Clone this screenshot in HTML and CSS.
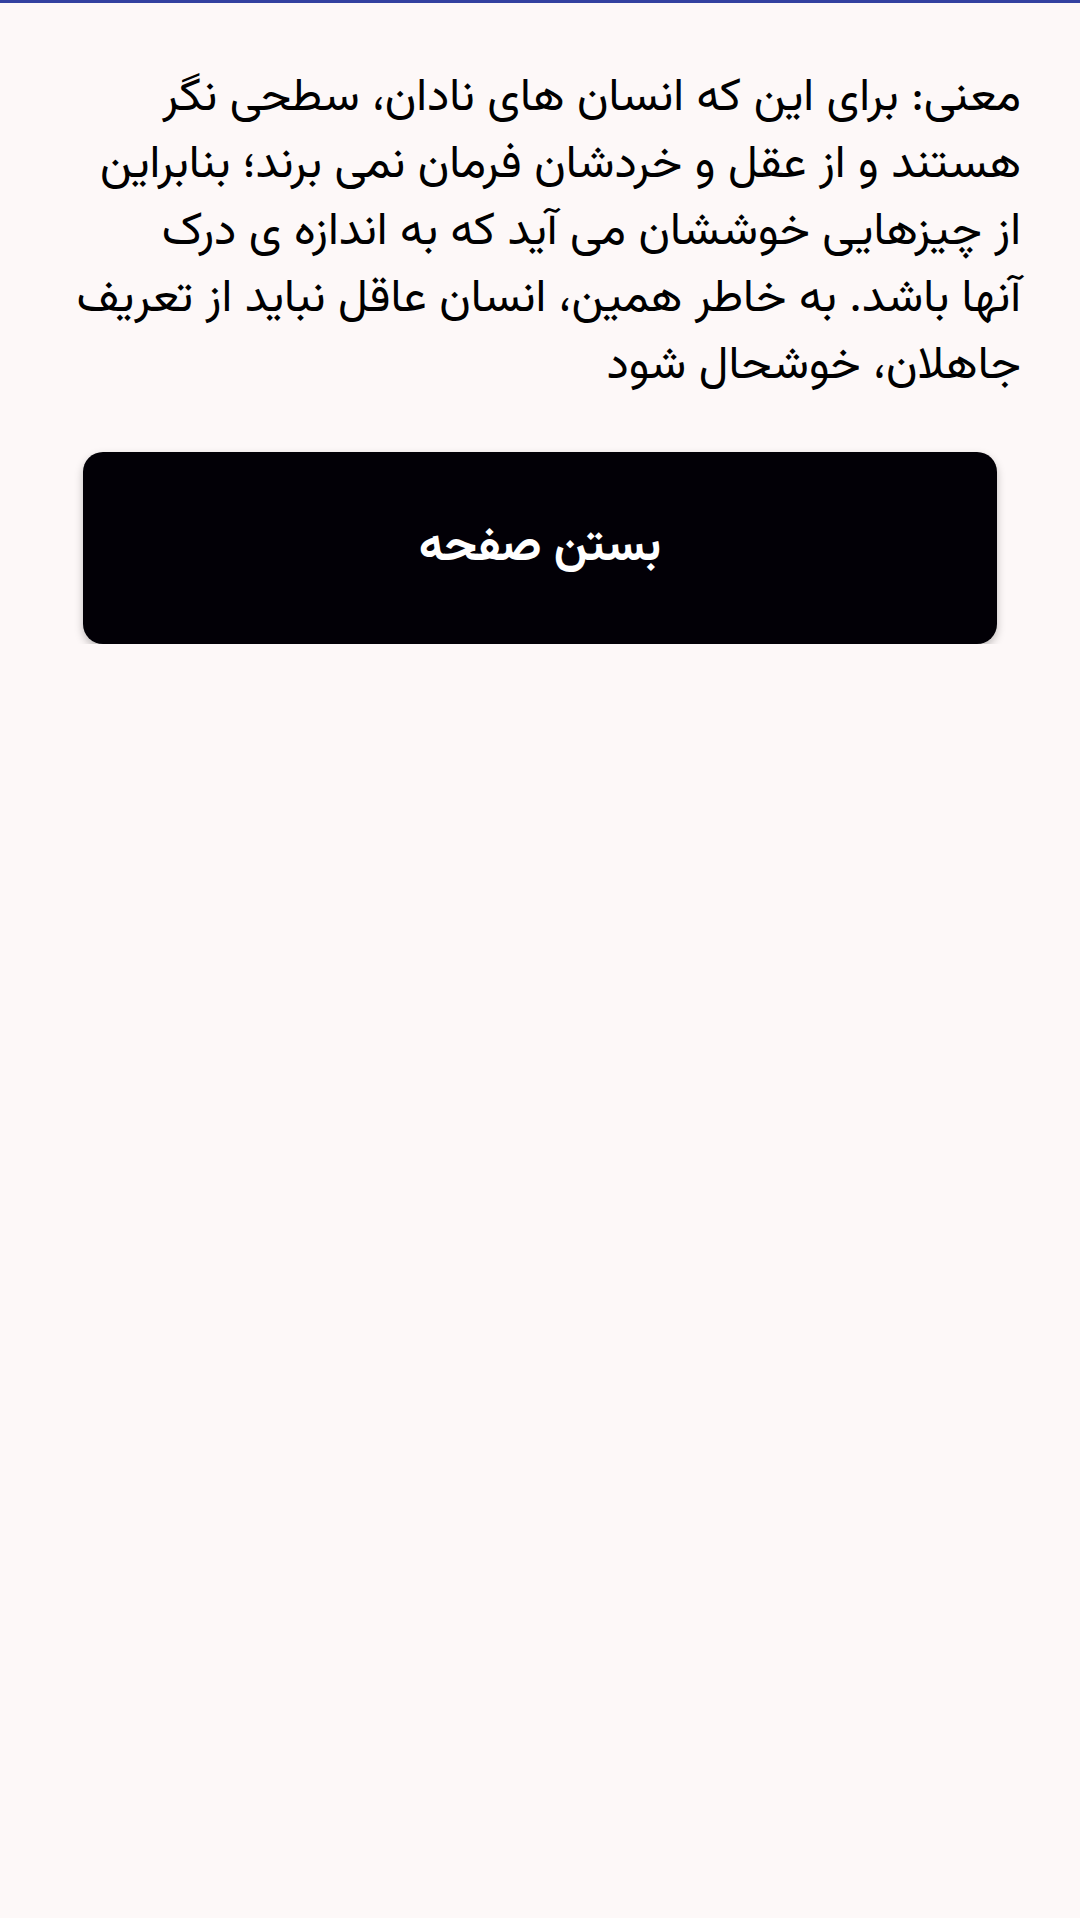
FILE: index.html
```html
<!DOCTYPE html>
<html lang="fa" dir="rtl">
<head>
    <meta charset="UTF-8">
    <meta name="viewport" content="width=device-width, initial-scale=1.0">
    <title>معنی</title>
    <link rel="stylesheet" href="styles.css">
</head>
<body>
    <!-- Top accent line -->
    <div class="top-bar"></div>

    <div class="content">
        <!-- Meaning text, broken the same way the app wraps it -->
        <p class="meaning">معنی: برای این که انسان های نادان، سطحی نگر<br>هستند و از عقل و خردشان فرمان نمی برند؛ بنابراین<br>از چیزهایی خوششان می آید که به اندازه ی درک<br>آنها باشد. به خاطر همین، انسان عاقل نباید از تعریف<br>جاهلان، خوشحال شود</p>

        <!-- Close button -->
        <button class="close-button">بستن صفحه</button>
    </div>
</body>
</html>
```

FILE: styles.css
```css
/* Page basics */
body {
    margin: 0;
    background-color: #fdf8f8;
    font-family: "Vazirmatn", "Noto Sans Arabic", "DejaVu Sans", sans-serif;
    color: #000;
}

.top-bar {
    height: 3px;
    background-color: #3341a0;
}

.content {
    padding: 62px 59px 0 59px;
}

.meaning {
    margin: 0;
    font-size: 46.5px;
    line-height: 67px;
    text-align: right;
    white-space: nowrap;
}

.close-button {
    display: block;
    width: 914px;
    height: 192px;
    margin: 52px auto 0 auto;
    border: none;
    border-radius: 20px;
    background-color: #020006;
    color: #fff;
    font-family: inherit;
    font-size: 48px;
    font-weight: bold;
    box-shadow: 0 4px 8px rgba(0, 0, 0, 0.25);
}
```
